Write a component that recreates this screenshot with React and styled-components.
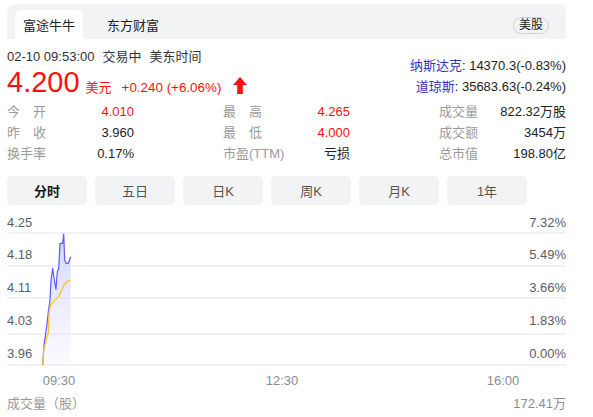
import React from "react";
import styled, { createGlobalStyle } from "styled-components";

const Global = createGlobalStyle`
  html, body { margin: 0; padding: 0; background: #fff; }
  body { font-family: "Liberation Sans", Arial, "Noto Sans CJK SC", sans-serif; color: #222; }
  * { box-sizing: border-box; }
`;

const Page = styled.div`
  width: 593px;
  padding: 4px 27px 0 7px;
`;

const Header = styled.div`
  height: 35px;
  background: #f2f3f5;
  border-radius: 8px 8px 0 0;
  display: flex;
  align-items: flex-end;
  padding: 0 17px 0 8px;
`;

const Tab = styled.div`
  height: 29px;
  padding: 0 8px;
  display: flex;
  align-items: center;
  font-size: 13px;
  color: #222;
  border-radius: 6px 6px 0 0;
  background: ${(p) => (p.$active ? "#fff" : "transparent")};
  margin-left: ${(p) => (p.$active ? "0" : "16px")};
`;

const Market = styled.div`
  margin-left: auto;
  margin-bottom: 5px;
  height: 17px;
  padding: 0 5px;
  border: 1px solid #cfd0d4;
  border-radius: 9px;
  font-size: 12px;
  line-height: 15px;
  color: #222;
`;

const Info = styled.div`
  display: flex;
  justify-content: space-between;
  margin-top: 9px;
`;

const DateLine = styled.div`
  font-size: 13px;
  line-height: 18px;
  color: #333;
  display: flex;
  gap: 8px;
`;

const PriceRow = styled.div`
  display: flex;
  align-items: baseline;
  color: #ff0f0f;
  height: 32px;
`;

const Price = styled.span`
  font-size: 29px;
  line-height: 32px;
`;

const Unit = styled.span`
  font-size: 13px;
  margin-left: 6px;
`;

const Change = styled.span`
  font-size: 13.4px;
  margin-left: 10px;
`;

const Arrow = styled.svg`
  width: 14px;
  height: 17px;
  margin-left: 12px;
  align-self: center;
  margin-top: 7px;
`;

const Indices = styled.div`
  padding-top: 7px;
  text-align: right;
  font-size: 13px;
  line-height: 21px;
  color: #222;
`;

const IndexName = styled.span`
  color: #3535c0;
`;

const Stats = styled.div`
  display: grid;
  grid-template-columns: repeat(3, 1fr);
  column-gap: 89px;
  margin-top: 3px;
`;

const Stat = styled.div`
  display: flex;
  justify-content: space-between;
  font-size: 13px;
  line-height: 21px;
`;

const Label = styled.span`
  color: #9b9b9b;
  min-width: 39px;
  text-align-last: justify;
`;

const Value = styled.span`
  color: ${(p) => (p.$red ? "#ff0f0f" : "#222")};
`;

const Periods = styled.div`
  display: flex;
  gap: 8px;
  margin-top: 12px;
`;

const Period = styled.div`
  width: 80px;
  height: 29px;
  border-radius: 5px;
  background: #f2f3f5;
  display: flex;
  align-items: center;
  justify-content: center;
  font-size: 13px;
  color: ${(p) => (p.$active ? "#1a1a1a" : "#555")};
  font-weight: ${(p) => (p.$active ? 700 : 400)};
`;

const Chart = styled.svg`
  display: block;
  width: 559px;
  height: 180px;
  margin-top: 5px;
  font-family: "Liberation Sans", Arial, sans-serif;
`;

const Footer = styled.div`
  display: flex;
  justify-content: space-between;
  margin-top: 5px;
  font-size: 13px;
  line-height: 18px;
  color: #999;
`;

const FooterValue = styled.span`
  color: #8a8c99;
`;

const stats = [
  ["今开", "4.010", true, "最高", "4.265", true, "成交量", "822.32万股"],
  ["昨收", "3.960", false, "最低", "4.000", true, "成交额", "3454万"],
  ["换手率", "0.17%", false, "市盈(TTM)", "亏损", false, "总市值", "198.80亿"],
];

const periods = ["分时", "五日", "日K", "周K", "月K", "1年"];

const blue = [
  [42.7, 365], [44, 345], [46.7, 326.7], [48.3, 311.7], [50, 300], [51, 280],
  [52.7, 268.3], [54.3, 280], [56, 289.3], [57.3, 271.7], [58.7, 268.3], [60, 243.3],
  [61.7, 243.3], [62.7, 243.3], [63.7, 234], [64.7, 260], [66, 263.3], [68.3, 263.3], [70.7, 256.7],
].map(([x, y]) => [x - 7, y - 210]);

const yellow = [
  [42.7, 365], [44, 346.7], [45.7, 343.3], [46.7, 336.7], [48.3, 333.3], [49.3, 310],
  [50.7, 305], [53.3, 301.7], [56.7, 298.3], [59, 296], [61.7, 290], [64, 285],
  [66.7, 281.7], [70.7, 280],
].map(([x, y]) => [x - 7, y - 210]);

const pts = (a) => a.map(([x, y]) => `${x},${y}`).join(" ");

const gridRows = [
  { l: "4.25", r: "7.32%", ly: 12, gy: 23 },
  { l: "4.18", r: "5.49%", ly: 44, gy: 56 },
  { l: "4.11", r: "3.66%", ly: 77, gy: 88 },
  { l: "4.03", r: "1.83%", ly: 110, gy: 124 },
  { l: "3.96", r: "0.00%", ly: 143, gy: 155 },
];

export default function App() {
  const area = `M${blue[0][0]},155 L${pts(blue)} L${blue[blue.length - 1][0]},155 Z`;
  return (
    <Page>
      <Global />
      <Header>
        <Tab $active>富途牛牛</Tab>
        <Tab>东方财富</Tab>
        <Market>美股</Market>
      </Header>
      <Info>
        <div>
          <DateLine>
            <span>02-10 09:53:00</span>
            <span>交易中</span>
            <span>美东时间</span>
          </DateLine>
          <PriceRow>
            <Price>4.200</Price>
            <Unit>美元</Unit>
            <Change>+0.240 (+6.06%)</Change>
            <Arrow viewBox="0 0 14 17">
              <path d="M7 0 L14 8 L9.8 8 L9.8 17 L4.2 17 L4.2 8 L0 8 Z" fill="#ff0f0f" />
            </Arrow>
          </PriceRow>
        </div>
        <Indices>
          <div>
            <IndexName>纳斯达克</IndexName>: 14370.3(-0.83%)
          </div>
          <div>
            <IndexName>道琼斯</IndexName>: 35683.63(-0.24%)
          </div>
        </Indices>
      </Info>
      <Stats>
        {stats.map((r, i) => (
          <React.Fragment key={i}>
            <Stat>
              <Label>{r[0]}</Label>
              <Value $red={r[2]}>{r[1]}</Value>
            </Stat>
            <Stat>
              <Label>{r[3]}</Label>
              <Value $red={r[5]}>{r[4]}</Value>
            </Stat>
            <Stat>
              <Label>{r[6]}</Label>
              <Value>{r[7]}</Value>
            </Stat>
          </React.Fragment>
        ))}
      </Stats>
      <Periods>
        {periods.map((p, i) => (
          <Period key={p} $active={i === 0}>
            {p}
          </Period>
        ))}
      </Periods>
      <Chart viewBox="0 0 559 180">
        <defs>
          <linearGradient id="fillg" x1="0" y1="0" x2="0" y2="1">
            <stop offset="0" stopColor="#c9ccff" stopOpacity="0.9" />
            <stop offset="1" stopColor="#eef0ff" stopOpacity="0.3" />
          </linearGradient>
        </defs>
        {gridRows.map((g) => (
          <g key={g.l}>
            <line x1="0" x2="559" y1={g.gy} y2={g.gy} stroke="#f1f1f3" strokeWidth="2" />
            <text x="0" y={g.ly + 4.5} fontSize="13" fill="#5a5d6a">{g.l}</text>
            <text x="559" y={g.ly + 4.5} fontSize="13" fill="#5a5d6a" textAnchor="end">{g.r}</text>
          </g>
        ))}
        <path d={area} fill="url(#fillg)" />
        <polyline points={pts(blue)} fill="none" stroke="#5c5cf5" strokeWidth="1.2" strokeLinejoin="round" />
        <polyline points={pts(yellow)} fill="none" stroke="#ffc21a" strokeWidth="1.2" strokeLinejoin="round" />
        <text x="52" y="174.5" fontSize="13" fill="#8a8c99" textAnchor="middle">09:30</text>
        <text x="275" y="174.5" fontSize="13" fill="#8a8c99" textAnchor="middle">12:30</text>
        <text x="496" y="174.5" fontSize="13" fill="#8a8c99" textAnchor="middle">16:00</text>
      </Chart>
      <Footer>
        <span>成交量（股）</span>
        <FooterValue>172.41万</FooterValue>
      </Footer>
    </Page>
  );
}
